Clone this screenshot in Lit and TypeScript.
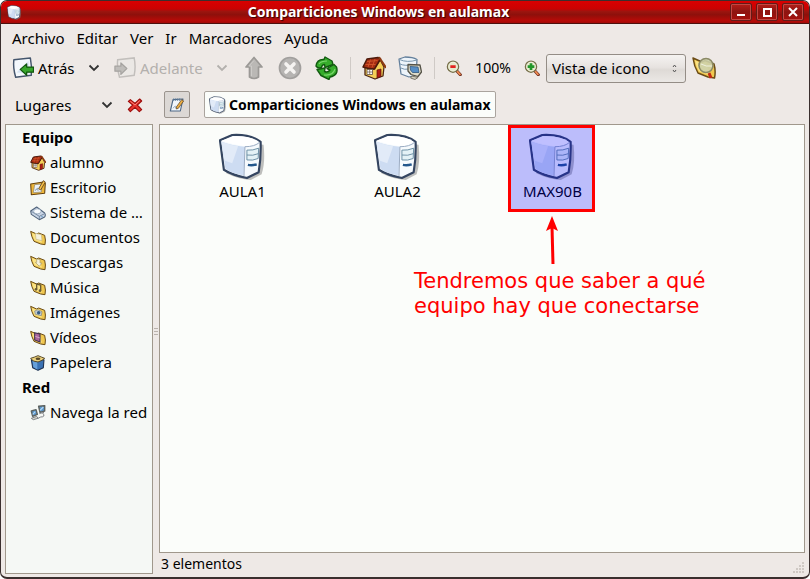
import { LitElement, html, css, svg } from "lit";
import { customElement, property } from "lit/decorators.js";

const server = svg`
  <path d="M7 8 L8 41 Q20 47 33 48 L44 42 Q48 30 46 12 Z" fill="#8a8a88" opacity=".55"/>
  <path d="M1.500 7.500 L14 2 Q33 1 43 9 Q43.500 26 41 40 L29 46 Q14 43 5.500 37.500 Z" fill="#f6fafd" stroke="#344560" stroke-width="2.200" stroke-linejoin="round"/>
  <path d="M3 9 Q14 13 27 14 L25.500 43.500 Q13 41 7 36.500 Z" fill="#cddcf2"/>
  <path d="M3 9 Q14 13 20 13.500 L14 31 L6 28 Z" fill="#e2ebf8"/>
  <path d="M3 8 L15 3.500 Q32 2.500 41 9 Q36 13.500 27 13.500 Q14 12 3 8Z" fill="#fff"/>
  <path d="M27 14 L26 44 M27 14 Q37 14 42 9.500" fill="none" stroke="#9aaac2" stroke-width="1"/>
  <path d="M29 17.500 Q35 18 41 15.500 L40.500 26 Q35 28.500 29 27.500 Z M29 22.500 Q35 23.500 41 21" fill="#e4f2f6" stroke="#6c8fa5" stroke-width="1"/>
  <path d="M30 32.500 Q34 33.500 39 32" fill="none" stroke="#23578c" stroke-width="2.400"/>`;

const folder = svg`
  <path d="M1 2 L10 6 L13 4.500 L22 8 Q24 15 22.500 22 L16 21 L6 17 Q2 10 1 2Z" fill="#f0c850" stroke="#6b4c16" stroke-width="1.500" stroke-linejoin="round"/>
  <path d="M3 4.500 L9 7 L14 6.500 L18 19 L7 15.500 Q4 10 3 4.500Z" fill="#fae386"/>`;

const house = svg`
  <path d="M3 11 L12 13 L18 3.500 L22 11 L21 20 L13 23 L3 19Z" fill="#f4cf58" stroke="#4a2412" stroke-width="1.300" stroke-linejoin="round"/>
  <path d="M1 11 L5 3 L16 1.500 L18.500 3 L12.500 13 Q6 13 1 11Z" fill="#a52c12" stroke="#4b1a0b" stroke-width="1.500" stroke-linejoin="round"/>
  <path d="M17.500 2 L23.500 11" stroke="#8d3a12" stroke-width="2.200" stroke-linecap="round"/>
  <path d="M5 5.500 L15.500 4.500 M3.500 8.500 L13.500 8.500 M8.500 3.500 L6 11 M13 3 L10 11.500" stroke="#d3572a" fill="none" stroke-width=".9"/>
  <path d="M15 14 L19 13 V20.500 L15 22Z" fill="#b01c14" stroke="#5a130c" stroke-width=".7"/>
  <rect x="5" y="13.500" width="5.500" height="5" fill="#fff" stroke="#675244" stroke-width=".8"/>
  <path d="M7.700 13.500v5M5 16h5.500" stroke="#675244" stroke-width=".7"/>`;

const page = svg`<path d="M2 3 L20 1 Q22 11 21 20 L4 22 Q1 12 2 3Z" fill="#f4f8fc" stroke="#45566d" stroke-width="1.600" stroke-linejoin="round"/><path d="M5 17 L18 4 L19 18Z" fill="#d8e5f3"/>`;
const lens = svg`<path d="M16 16 L21.500 22" stroke="#6b2a1c" stroke-width="4.600" stroke-linecap="round"/><path d="M17 17 L21 21.500" stroke="#f08b52" stroke-width="2.600" stroke-linecap="round"/><circle cx="10.500" cy="10" r="8.300" fill="#e5e9ca" stroke="#77704a" stroke-width="2.200"/><circle cx="10.500" cy="10" r="6.700" fill="none" stroke="#f8f8e8"/>`;

const icons: Record<string, unknown> = {
  back: svg`${page}<path d="M9 13.500 L16 7.500 V11 H23.500 V16.500 H16 V20Z" fill="#37a62b" stroke="#12560f" stroke-width="1.400" stroke-linejoin="round"/>`,
  forward: svg`<path d="M4 3 L22 1 Q24 11 22 20 L6 22 Q3 12 4 3Z" fill="#ebe8e5" stroke="#c2bfbc" stroke-width="1.600"/><path d="M14 12.500 L7.500 6.500 V10 H1 V15.500 H7.500 V19Z" fill="#bfbdba" stroke="#a5a3a0" stroke-width="1.300" stroke-linejoin="round"/>`,
  up: svg`<path d="M12 1.500 L20 11 H16.500 V21 Q12 24 7.500 21 V11 H4Z" fill="#bab8b5" stroke="#9b9996" stroke-width="1.700" stroke-linejoin="round"/><path d="M12 4.500 L7 10H9.500V20" fill="none" stroke="#cdcbc8"/>`,
  stop: svg`<circle cx="12" cy="12" r="10.500" fill="#b6b4b2" stroke="#a19f9d" stroke-width="1.700"/><path d="M8 8 L16 16 M16 8 L8 16" stroke="#f5f3f1" stroke-width="3.600" stroke-linecap="round"/>`,
  reload: svg`<path d="M2 10 Q3 3 10 3.500 L11 1 L18 5 L19 8.500 L11 11.500 L10.500 8.500 Q8 8.500 7.500 11.500 Q4 13 2 10Z" fill="#36ad2b" stroke="#125b10" stroke-width="1.400" stroke-linejoin="round"/><path d="M22.500 11 Q25 19 16 21 L15 23.500 L7 19.500 L3 13.500 L11 12 L10.500 15.500 Q14 17 16 14 L13 12.500 L20 8.500Z" fill="#36ad2b" stroke="#125b10" stroke-width="1.400" stroke-linejoin="round"/><path d="M5 8 Q7 5 13 5 M10 19 Q19 20 21 13" fill="none" stroke="#7bd66d" stroke-width="1.100"/>`,
  house,
  computer: svg`<path d="M1 3 L7 1 Q15 1 19 3.500 L18 19 L11 21 L3 18Z" fill="#edf4fa" stroke="#65819d" stroke-width="1.300" stroke-linejoin="round"/><path d="M1.500 3.500 Q9 7 19 4 M2 8 Q6 10 15 9 M3 12 Q6 14 11 13" fill="none" stroke="#7895ae"/><path d="M10 8.500 L22 9 L23.500 16 L20 20.500 L13 18.500 L10 15Z" fill="#dedbc9" stroke="#555348" stroke-width="1.300" stroke-linejoin="round"/><path d="M12 10.500 L20 11 L21 16.500 L14.500 16.500 L12.500 14Z" fill="#568ec6" stroke="#31587f" stroke-width=".8"/><path d="M14 20 L20 21.500 L17 23.500 L12.500 22Z" fill="#d5d2c2" stroke="#6e6a5d" stroke-width=".9"/>`,
  zoomOut: svg`${lens}<path d="M6.500 10H14.500" stroke="#e2231f" stroke-width="4.200"/>`,
  zoomIn: svg`${lens}<path d="M5.500 10H15.500M10.500 5V15" stroke="#23962a" stroke-width="4"/>`,
  search: svg`${folder}<circle cx="14" cy="9.500" r="7" fill="#cdd0a8" fill-opacity=".9" stroke="#8b8a66" stroke-width="1.600"/><path d="M9 8 Q14 11 20 10" stroke="#eef0df" fill="none"/><path d="M17 17 L19 22" stroke="#c22a14" stroke-width="3"/>`,
  close: svg`<path d="M5 4 L12 9.500 L19 3 L22 6 L15.500 12 L22 19 L18.500 22 L12 15.500 L5 22 L2 18.500 L8.500 12 L2 6.500Z" fill="#e9342d" stroke="#9c0d0c" stroke-width="1.700" stroke-linejoin="round"/><path d="M5 6.500 L12 12 L19 5.500" fill="none" stroke="#ff8f83" stroke-width="1.300"/>`,
  edit: svg`<path d="M6 4 L21 3 L17 21 L2 21Z" fill="#f1f6fb" stroke="#4d6785" stroke-width="1.700" stroke-linejoin="round"/><path d="M7 2v4M10 2v4M13 2v4M16 2v4" stroke="#5b7898" stroke-width="1.200"/><path d="M6 17 Q11 10 10 17" fill="none" stroke="#8ca5bf" stroke-width="1.300"/><path d="M11 15 L19 4 L22 6 L14 17 L11 18Z" fill="#ecae42" stroke="#5f4422" stroke-width="1.100"/>`,
  desktop: svg`<path d="M1 6 L20 3 L23 5 L22 20 L2 22Z" fill="#edb63a" stroke="#65410d" stroke-width="1.600" stroke-linejoin="round"/><path d="M7 7 L18 6 L17 18 L5 19Z" fill="#edf2f6" stroke="#8a8470" stroke-width="1"/><path d="M8 16 Q12 9 12 16" stroke="#66819a" fill="none" stroke-width="1.300"/><path d="M13 13 L20 1 L23 3 L16 15Z" fill="#f4c04c" stroke="#5b3b10" stroke-width="1.200"/>`,
  drive: svg`<path d="M1 9 L10 3 L22 12 Q24 15 22 18 L14 22 L2 14Z" fill="#c9d6e6" stroke="#50637b" stroke-width="1.600" stroke-linejoin="round"/><path d="M2 9.500 L14 17 L22 13 M14 17V21" stroke="#60758e" fill="none" stroke-width="1.200"/><ellipse cx="11" cy="9.500" rx="5.500" ry="3.800" fill="#f8fbfe" stroke="#889cb1"/><circle cx="18" cy="17.500" r="1" fill="#448ac4"/>`,
  documents: svg`${folder}<path d="M8 5 L17 7 L18 16 L9 14Z" fill="#f3f0de" stroke="#c5b987"/>`,
  downloads: svg`${folder}<path d="M10 6 L15 7 V12 H18 L14 17 L8 11 H10Z" fill="#f5f1dc" stroke="#a79a68"/>`,
  music: svg`${folder}<path d="M10 14 V6 L16 7.500 V16" fill="none" stroke="#6b5c34" stroke-width="2"/><circle cx="9" cy="14" r="2" fill="#6b5c34"/><circle cx="15" cy="16" r="2" fill="#6b5c34"/>`,
  pictures: svg`${folder}<path d="M7 9 L12 7 L18 10 L17 16 L8 14Z" fill="#c3ccd0" stroke="#7e8581"/><circle cx="13" cy="11.500" r="2.600" fill="#365d86"/>`,
  videos: svg`${folder}<path d="M7 4 L15 6 V18 L7 15Z" fill="#a9649b" stroke="#3d304c" stroke-width="1.600"/><path d="M8 9.500L15 12" stroke="#e9c5e1"/>`,
  trash: svg`<path d="M2 7 L21 7 L20 19 L12 23 L4 19Z" fill="#3a72b4" stroke="#1d3252" stroke-width="1.600" stroke-linejoin="round"/><path d="M11 10V22L5 18L4 9Z" fill="#66a0da"/><path d="M1 5 L7 3 L12 1 L17 3 L22 5 L18 8 L12 10.500 L5 9Z" fill="#ecd27c" stroke="#4d4020" stroke-width="1.400" stroke-linejoin="round"/><ellipse cx="12" cy="5.500" rx="3.600" ry="1.900" fill="#594a28"/>`,
  network: svg`<path d="M13 2 L22 1 L22 9 L15 11Z M2 9 L9 7 L11 14 L4 17Z" fill="#5b98cf" stroke="#5c625f" stroke-width="2.200" stroke-linejoin="round"/><path d="M15 8L20 3M4 14L8 10" stroke="#b7daf4" stroke-width="1.600"/><path d="M2 20 L10 17 L12 20 L5 22Z M14 13 L21 11" fill="#d9d8cd" stroke="#777b7f" stroke-width="1.400"/><path d="M19 12 Q24 18 16 18 L12 20" stroke="#777b7f" stroke-width="1.400" fill="none"/>`,
  chevron: svg`<path d="M3 7 L12 16 L21 7" fill="none" stroke="currentColor" stroke-width="3.600"/>`,
};

@customElement("ui-icon")
class UiIcon extends LitElement {
  @property() name = "";
  static styles = css`
    :host { display: block; flex: none; width: var(--icon, 24px); height: var(--icon, 24px); }
    svg { display: block; width: 100%; height: 100%; }
  `;
  render() {
    const big = this.name === "server";
    return html`<svg viewBox=${big ? "1 0 48 49" : "0 0 24 24"} aria-hidden="true">${big ? server : icons[this.name]}</svg>`;
  }
}

const places = [
  ["house", "alumno"], ["desktop", "Escritorio"], ["drive", "Sistema de …"],
  ["documents", "Documentos"], ["downloads", "Descargas"], ["music", "Música"],
  ["pictures", "Imágenes"], ["videos", "Vídeos"], ["trash", "Papelera"],
];

@customElement("app-root")
class AppRoot extends LitElement {
  static styles = css`
    :host { display: block; font: 15px/20px "Noto Sans", "Open Sans", sans-serif; color: #000; }
    * { box-sizing: border-box; }
    button, select { font: inherit; color: inherit; margin: 0; padding: 0; border: 0; background: none; }
    button { display: flex; align-items: center; justify-content: center; }
    a { color: inherit; text-decoration: none; }
    h1, h2, ul { margin: 0; padding: 0; font: inherit; list-style: none; }
    .window { min-height: 100vh; display: flex; flex-direction: column; background: #eee9e6; border: 1px solid #3a2f2e; border-width: 1px 1px 2px; border-radius: 7px; overflow: hidden; }
    .title { height: 23px; display: grid; grid-template-columns: 26px 1fr 80px; align-items: center; padding: 0 5px 0 6px; border-bottom: 1px solid #4d100d; background: linear-gradient(#d90000, #c90202 35%, #9b150f 48%, #8e100b 62%, #b90a07 90%, #a00a08); color: #fff; }
    .title ui-icon { --icon: 15px; }
    .title h1 { text-align: center; font-size: 14px; font-weight: 700; white-space: nowrap; text-shadow: 1px 1px 1px #300; }
    .controls { display: flex; justify-content: flex-end; gap: 4px; }
    .controls button { width: 22px; height: 18px; border: 1px solid #621b18; border-radius: 2px; background: linear-gradient(#b51e19, #8c1511 50%, #a80f0b); box-shadow: inset 0 0 0 1px #c24842; }
    .controls svg { width: 12px; height: 12px; fill: none; stroke: #fff; stroke-width: 2; }
    .menu { display: flex; gap: 12px; height: 27px; align-items: center; padding: 0 11px; }
    .toolbar { display: flex; height: 34px; align-items: center; padding-left: 11px; }
    .toolbar button { height: 32px; flex: none; }
    .back, .fwd { justify-content: flex-start; gap: 4px; }
    .back { width: 68px; }
    .fwd { width: 100px; padding-left: 6px; }
    .back ui-icon, .fwd ui-icon { --icon: 22px; }
    .drop { width: 28px; --icon: 12px; color: #333; }
    .off { color: #b3b0ad; }
    .tool { width: 36px; }
    .zoom { width: 28px; --icon: 16px; }
    .sep { flex: none; width: 12px; height: 22px; background: linear-gradient(#cfcac6, #cfcac6) center / 1px 100% no-repeat; }
    .level { width: 50px; text-align: center; font-size: 14px; }
    .view { position: relative; flex: none; width: 140px; }
    .view select { display: block; width: 100%; height: 29px; appearance: none; padding: 0 5px; border: 1px solid #948d86; border-radius: 3px; background: linear-gradient(#f5f3f1, #e7e3e0 45%, #dedad6 55%, #ebe8e5); }
    .view svg { position: absolute; right: 9px; top: 10px; width: 5px; height: 9px; fill: none; stroke: #555; pointer-events: none; }
    .location { display: flex; align-items: center; height: 39px; }
    .side-head { flex: none; width: 158px; display: flex; align-items: center; padding-left: 14px; }
    .side-title { flex: 1; display: flex; justify-content: space-between; align-items: center; height: 28px; }
    .side-title ui-icon { --icon: 12px; color: #333; }
    .side-close { width: 46px; --icon: 16px; padding-right: 2px; height: 28px; }
    .toggle { width: 26px; height: 27px; margin: 0 14px 0 5px; border: 1px solid #9b948e; border-radius: 2px; background: #dcd8d5; --icon: 16px; }
    .crumb { height: 27px; padding: 0 4px; gap: 2px; border: 1px solid #aaa49e; border-radius: 2px; background: #fbfdfa; font-size: 14px; font-weight: 700; --icon: 18px; white-space: nowrap; }
    .body { flex: 1; display: grid; grid-template-columns: 148px 6px minmax(0, 1fr); padding: 0 4px 3px; }
    .side { border: 1px solid #a0988c; background: #f5f8f5; padding-left: 16px; }
    .side h2 { font-weight: 700; line-height: 25px; }
    .side a { display: flex; align-items: center; gap: 4px; height: 25px; padding-left: 8px; --icon: 16px; line-height: 18px; }
    .side span { white-space: nowrap; }
    .side li span { padding-bottom: 2px; }
    .grip { align-self: center; justify-self: center; width: 4px; height: 7px; margin-bottom: 36px; background: repeating-linear-gradient(#b9b2ac 0 1px, transparent 1px 3px); }
    .main { display: flex; flex-direction: column; }
    .files { flex: 1; border: 1px solid #a0988c; background: #fbfdfa; display: grid; grid-template-columns: repeat(auto-fill, 155px); align-content: start; padding: 0 5px; }
    .file { position: relative; height: 87px; }
    .file button { width: 100%; flex-direction: column; justify-content: flex-start; padding-top: 8px; line-height: 20px; font-size: 15px; --icon: 48px; }
    .mark { position: absolute; left: 33px; top: 0; width: 87px; height: 87px; border: 3px solid #f00; background: rgb(0 0 255 / .25); background-clip: padding-box; pointer-events: none; }
    .arrow { position: absolute; left: 69px; top: 91px; width: 16px; height: 50px; }
    .note { position: absolute; left: -61px; top: 144px; margin: 0; color: #f00; font: 21px/25px "DejaVu Sans", sans-serif; white-space: nowrap; }
    .status { display: flex; justify-content: space-between; align-items: center; height: 21px; padding-left: 2px; font-size: 14px; }
    .resize { align-self: flex-end; width: 12px; height: 12px; fill: #cfc9c4; }
  `;

  private place(icon: string, label: string) {
    return html`<li><a href="#"><ui-icon name=${icon}></ui-icon><span>${label}</span></a></li>`;
  }
  private tool(icon: string, label: string, cls = "tool", disabled = false) {
    return html`<button class=${cls} aria-label=${label} ?disabled=${disabled}><ui-icon name=${icon}></ui-icon></button>`;
  }
  render() {
    return html`
      <div class="window">
        <header class="title">
          <ui-icon name="server"></ui-icon>
          <h1>Comparticiones Windows en aulamax</h1>
          <div class="controls">
            <button aria-label="Minimizar"><svg viewBox="0 0 12 12"><path d="M2 9H10" /></svg></button>
            <button aria-label="Maximizar"><svg viewBox="0 0 12 12"><path d="M3 3H10V10H3Z" /></svg></button>
            <button aria-label="Cerrar"><svg viewBox="0 0 12 12"><path d="M2 2L10 10M10 2L2 10" /></svg></button>
          </div>
        </header>
        <nav class="menu">
          ${["Archivo", "Editar", "Ver", "Ir", "Marcadores", "Ayuda"].map((m) => html`<button>${m}</button>`)}
        </nav>
        <div class="toolbar">
          <button class="back"><ui-icon name="back"></ui-icon>Atrás</button>
          ${this.tool("chevron", "Historial atrás", "drop")}
          <button class="fwd off" disabled><ui-icon name="forward"></ui-icon>Adelante</button>
          ${this.tool("chevron", "Historial adelante", "drop off", true)}
          ${this.tool("up", "Subir", "tool", true)}
          ${this.tool("stop", "Detener", "tool", true)}
          ${this.tool("reload", "Recargar")}
          <span class="sep"></span>
          ${this.tool("house", "Carpeta personal")}
          ${this.tool("computer", "Equipo")}
          <span class="sep"></span>
          ${this.tool("zoomOut", "Reducir", "zoom")}
          <span class="level">100%</span>
          ${this.tool("zoomIn", "Ampliar", "zoom")}
          <div class="view">
            <select aria-label="Vista"><option>Vista de icono</option></select>
            <svg viewBox="0 0 5 9"><path d="M1 3L2.500 1L4 3M1 6L2.500 8L4 6" /></svg>
          </div>
          ${this.tool("search", "Buscar")}
        </div>
        <div class="location">
          <div class="side-head">
            <button class="side-title">Lugares<ui-icon name="chevron"></ui-icon></button>
            ${this.tool("close", "Cerrar panel", "side-close")}
          </div>
          ${this.tool("edit", "Editar ruta", "toggle")}
          <button class="crumb"><ui-icon name="server"></ui-icon>Comparticiones Windows en aulamax</button>
        </div>
        <div class="body">
          <aside class="side">
            <h2>Equipo</h2>
            <ul>${places.map(([i, l]) => this.place(i, l))}</ul>
            <h2>Red</h2>
            <ul>${this.place("network", "Navega la red")}</ul>
          </aside>
          <div class="grip"></div>
          <main class="main">
            <div class="files">
              ${["AULA1", "AULA2", "MAX90B"].map((n) => html`
                <div class="file">
                  <button><ui-icon name="server"></ui-icon>${n}</button>
                  ${n === "MAX90B" ? html`
                    <div class="mark"></div>
                    <svg class="arrow" viewBox="0 0 16 50"><path d="M8 0L14 15L8 12L2 15Z" fill="#f00" /><path d="M8 11L9 48" stroke="#f00" stroke-width="3" /></svg>
                    <p class="note">Tendremos que saber a qué<br />equipo hay que conectarse</p>` : ""}
                </div>`)}
            </div>
            <footer class="status">
              3 elementos
              <svg class="resize" viewBox="0 0 12 12"><path d="M9 0h2v2h-2zM9 3h2v2h-2zM6 3h2v2h-2zM9 6h2v2h-2zM6 6h2v2h-2zM3 6h2v2h-2zM9 9h2v2h-2zM6 9h2v2h-2zM3 9h2v2h-2zM0 9h2v2h-2z" /></svg>
            </footer>
          </main>
        </div>
      </div>`;
  }
}
